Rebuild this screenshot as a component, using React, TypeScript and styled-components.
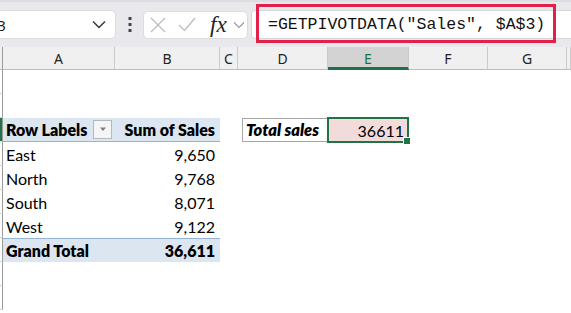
import React from 'react'
import styled, { createGlobalStyle } from 'styled-components'

const GlobalStyle = createGlobalStyle`
  html, body { margin: 0; padding: 0; background: #fff; }
  #root { width: 571px; height: 313px; overflow: hidden; }
`;

const Page = styled.div`
  width: 571px;
  height: 313px;
  background: #fff;
  overflow: hidden;
  font-family: Lato, "Open Sans", sans-serif;
`;

const Toolbar = styled.div`
  height: 47px;
  box-sizing: border-box;
  background: #e9e9ed;
  border-top: 2px solid #dedee2;
  display: flex;
  align-items: center;
`;

const NameBox = styled.div`
  width: 130px;
  height: 29px;
  margin-left: -14px;
  box-sizing: border-box;
  background: #fff;
  border: 1px solid #dcdcdc;
  border-radius: 5px;
  display: flex;
  align-items: center;
  justify-content: space-between;
  padding: 0 9px 0 2px;
  font-family: "Noto Sans", sans-serif;
  font-size: 15px;
  color: #222;
`;

const Dots = styled.div`
  width: 27px;
  display: flex;
  justify-content: center;
`;

const FxBox = styled.div`
  width: 105px;
  height: 28px;
  box-sizing: border-box;
  background: #fff;
  border: 1px solid #dcdcdc;
  border-radius: 5px;
  display: flex;
  align-items: center;
  padding: 0 0 0 6px;
  gap: 12px;
`;

const Fx = styled.span`
  font-family: "Liberation Serif", serif;
  font-style: italic;
  font-size: 23px;
  color: #222;
  margin-left: 2px;
  margin-right: -6px;
  line-height: 1;
`;

const FormulaBar = styled.div`
  position: relative;
  flex: 1;
  height: 29px;
  margin-left: 3px;
  margin-right: -6px;
  box-sizing: border-box;
  background: #fff;
  border: 1px solid #d6d6d6;
  border-radius: 4px 0 0 4px;
  display: flex;
  align-items: center;
  padding-left: 16px;
  font-family: "Liberation Mono", monospace;
  font-size: 16.5px;
  color: #111;
`;

const Highlight = styled.div`
  position: absolute;
  left: 4px;
  top: -7px;
  width: 300px;
  height: 39px;
  box-sizing: border-box;
  border: 3px solid #e3204a;
  pointer-events: none;
`;

const Sheet = styled.div`
  display: grid;
  grid-template-columns: 3px 112px 105px 18px 90px 81px 79px 79px 1fr;
  grid-template-rows: 23px repeat(10, 24px);
`;

const ColHead = styled.div<{ $active?: boolean }>`
  background: ${p => (p.$active ? '#d3d3d3' : '#f0f0f0')};
  border-right: 1px solid #cacaca;
  border-bottom: ${p => (p.$active ? '3px solid #1e7145' : '1px solid #bdbdbd')};
  box-sizing: border-box;
  display: flex;
  align-items: center;
  justify-content: center;
  font-family: "Noto Sans", sans-serif;
  font-size: 14px;
  color: ${p => (p.$active ? '#1e7145' : '#222')};
  padding-top: ${p => (p.$active ? '2px' : '0')};
`;

const Corner = styled.div`
  background: #f0f0f0;
  border-right: 1px solid #9a9a9a;
  border-bottom: 1px solid #bdbdbd;
`;

const RowStub = styled.div<{ $active?: boolean; $row: number }>`
  grid-column: 1;
  grid-row: ${p => p.$row};
  background: ${p => (p.$active ? '#217346' : '#fff')};
  border-right: 1px solid #9a9a9a;
  border-bottom: 1px solid #d4d4d4;
`;

const PivotCell = styled.div<{
  $col: string
  $row: number
  $band?: 'head' | 'total'
  $bold?: boolean
  $right?: boolean
}>`
  grid-column: ${p => p.$col};
  grid-row: ${p => p.$row};
  background: ${p => (p.$band ? '#dce6f1' : '#fff')};
  border-bottom: ${p => (p.$band === 'head' ? '1px solid #95b3d7' : 'none')};
  border-top: ${p => (p.$band === 'total' ? '1px solid #95b3d7' : 'none')};
  box-sizing: border-box;
  display: flex;
  align-items: center;
  justify-content: ${p => (p.$right ? 'flex-end' : 'space-between')};
  padding: 0 5px 0 3px;
  font-size: 16px;
  font-weight: ${p => (p.$bold ? 800 : 400)};
  color: #000;
  white-space: nowrap;
`;

const FilterButton = styled.div`
  width: 19px;
  height: 19px;
  box-sizing: border-box;
  border: 1px solid #b8b8b8;
  background: #f5f5f5;
  display: flex;
  align-items: center;
  justify-content: center;
  margin-right: -2px;
`;

const LabelCell = styled.div`
  grid-column: 5;
  grid-row: 4;
  margin-left: 4px;
  border: 1px solid #a6a6a6;
  border-right: none;
  box-sizing: border-box;
  display: flex;
  align-items: center;
  padding-left: 3px;
  font-size: 16.5px;
  font-weight: 800;
  font-style: italic;
  color: #000;
  white-space: nowrap;
`;

const ActiveCell = styled.div`
  position: relative;
  grid-column: 6;
  grid-row: 4;
  margin: -1px 0 -1px -1px;
  background: #f2dcdb;
  border: 2px solid #217346;
  box-sizing: border-box;
  display: flex;
  align-items: center;
  justify-content: flex-end;
  padding-right: 3px;
  font-size: 16px;
  color: #000;
`;

const FillHandle = styled.div`
  position: absolute;
  right: -4px;
  bottom: -4px;
  width: 6px;
  height: 6px;
  background: #217346;
  border: 1px solid #fff;
`;

const columns = ['A', 'B', 'C', 'D', 'E', 'F', 'G', '']

const rows = [
  { label: 'East', value: '9,650' },
  { label: 'North', value: '9,768' },
  { label: 'South', value: '8,071' },
  { label: 'West', value: '9,122' },
]

export default function App() {
  return (
    <Page>
      <GlobalStyle />
      <Toolbar>
        <NameBox>
          <span>E3</span>
          <svg width="14" height="9" viewBox="0 0 14 9">
            <path d="M1 1.5 L7 7.5 L13 1.5" fill="none" stroke="#333" strokeWidth="1.4" />
          </svg>
        </NameBox>
        <Dots>
          <svg width="4" height="15" viewBox="0 0 4 15">
            <rect x="0.5" y="0" width="3" height="3" fill="#444" />
            <rect x="0.5" y="6" width="3" height="3" fill="#444" />
            <rect x="0.5" y="12" width="3" height="3" fill="#444" />
          </svg>
        </Dots>
        <FxBox>
          <svg width="16" height="16" viewBox="0 0 16 16">
            <path d="M1 1 L15 15 M15 1 L1 15" stroke="#bdbdbd" strokeWidth="1.3" fill="none" />
          </svg>
          <svg width="18" height="15" viewBox="0 0 18 15">
            <path d="M1 8 L6.5 13.5 L17 1" stroke="#bdbdbd" strokeWidth="1.3" fill="none" />
          </svg>
          <Fx>fx</Fx>
          <svg width="12" height="8" viewBox="0 0 12 8">
            <path d="M1 1.5 L6 6.5 L11 1.5" fill="none" stroke="#9a9a9a" strokeWidth="1.2" />
          </svg>
        </FxBox>
        <FormulaBar>
          =GETPIVOTDATA("Sales", $A$3)
          <Highlight />
        </FormulaBar>
      </Toolbar>
      <Sheet>
        <Corner />
        {columns.map((c, i) => (
          <ColHead key={i} $active={c === 'E'}>{c}</ColHead>
        ))}
        {Array.from({ length: 10 }, (_, i) => (
          <RowStub key={i} $row={i + 2} $active={i === 2} />
        ))}
        <PivotCell $col="2" $row={4} $band="head" $bold>
          Row Labels
          <FilterButton>
            <svg width="8" height="5" viewBox="0 0 8 5">
              <path d="M1 0.5 L7 0.5 L4 4 Z" fill="#7f7f7f" />
            </svg>
          </FilterButton>
        </PivotCell>
        <PivotCell $col="3" $row={4} $band="head" $bold $right>Sum of Sales</PivotCell>
        {rows.map((r, i) => (
          <React.Fragment key={r.label}>
            <PivotCell $col="2" $row={5 + i}>{r.label}</PivotCell>
            <PivotCell $col="3" $row={5 + i} $right>{r.value}</PivotCell>
          </React.Fragment>
        ))}
        <PivotCell $col="2" $row={9} $band="total" $bold>Grand Total</PivotCell>
        <PivotCell $col="3" $row={9} $band="total" $bold $right>36,611</PivotCell>
        <LabelCell>Total sales</LabelCell>
        <ActiveCell>
          36611
          <FillHandle />
        </ActiveCell>
      </Sheet>
    </Page>
  )
}
